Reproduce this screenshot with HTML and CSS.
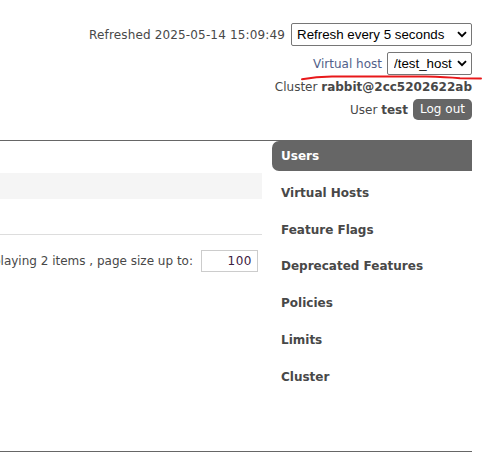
FILE: index.html
```html
<!DOCTYPE html>
<html>
<head>
<meta charset="utf-8">
<link rel="stylesheet" href="styles.css">
</head>
<body>
<div class="page">
  <div class="header">
    <div class="row">
      <span class="label refreshed">Refreshed 2025-05-14 15:09:49</span>
      <span class="sel-wrap sel-refresh">
        <select class="sel"><option>Refresh every 5 seconds</option></select>
        <svg class="chev" width="10" height="7" viewBox="0 0 10 7"><path d="M1 1.2 L5 5.2 L9 1.2" fill="none" stroke="#000" stroke-width="1.9"/></svg>
      </span>
    </div>
    <div class="row row-vhost">
      <span class="label vlabel">Virtual host</span>
      <span class="sel-wrap sel-vhost">
        <select class="sel"><option>/test_host</option></select>
        <svg class="chev" width="10" height="7" viewBox="0 0 10 7"><path d="M1 1.2 L5 5.2 L9 1.2" fill="none" stroke="#000" stroke-width="1.9"/></svg>
      </span>
    </div>
    <div class="row row-text">Cluster&nbsp;<b>rabbit@2cc5202622ab</b></div>
    <div class="row row-user">User&nbsp;<b>test</b><button class="logout">Log out</button></div>
    <svg class="scribble" width="484" height="12" viewBox="0 0 484 12"><path d="M302 5.2 Q316 2.6 332 2.4 L426 2.6 Q446 3.2 460 4.2 L481 4.6" fill="none" stroke="#e8181a" stroke-width="2" stroke-linecap="round"/></svg>
  </div>
  <div class="main">
    <div class="content">
      <div class="band"></div>
      <div class="rule"></div>
      <div class="pager">
        <span class="pager-text">Displaying 2 items , page size up to:</span>
        <input class="pagesize" type="text" value="100">
      </div>
    </div>
    <ul class="nav">
      <li class="nav-item active">Users</li>
      <li class="nav-item">Virtual Hosts</li>
      <li class="nav-item">Feature Flags</li>
      <li class="nav-item">Deprecated Features</li>
      <li class="nav-item">Policies</li>
      <li class="nav-item">Limits</li>
      <li class="nav-item">Cluster</li>
    </ul>
  </div>
</div>
</body>
</html>
```
FILE: styles.css
```css
html, body {
  margin: 0;
  padding: 0;
  background: #fff;
}
body {
  font-family: "DejaVu Sans", Verdana, sans-serif;
  font-size: 12px;
  color: #484848;
  width: 484px;
  height: 452px;
  overflow: hidden;
}
.page {
  width: 472px;
  padding-right: 12px;
}
.header {
  position: relative;
  padding-top: 23px;
  height: 117px;
  display: flex;
  flex-direction: column;
  align-items: flex-end;
}
.row {
  display: flex;
  align-items: center;
  justify-content: flex-end;
  white-space: nowrap;
}
.label {
  margin-right: 6px;
}
.refreshed {
  letter-spacing: 0.15px;
}
.vlabel {
  color: #52618a;
  margin-right: 5px;
}
.row-vhost {
  margin-top: 6px;
}
.row-text {
  margin-top: 5px;
  height: 14px;
  line-height: 14px;
}
.row-user {
  margin-top: 5px;
  height: 21px;
}
.row b {
  color: #484848;
}
.sel-wrap {
  position: relative;
  display: block;
  height: 23px;
}
.sel {
  appearance: none;
  -webkit-appearance: none;
  box-sizing: border-box;
  height: 23px;
  border: 1px solid #767676;
  border-radius: 2px;
  background: #fff;
  color: #000;
  font-family: "Liberation Sans", Arial, sans-serif;
  font-size: 13.33px;
  padding: 0 16px 0 5px;
  margin: 0;
  outline: none;
}
.sel-refresh .sel {
  width: 181px;
}
.sel-vhost .sel {
  width: 85px;
  padding-left: 6px;
  padding-right: 14px;
}
.chev {
  position: absolute;
  right: 5px;
  top: 8px;
  pointer-events: none;
}
.logout {
  margin-left: 5px;
  height: 21px;
  box-sizing: border-box;
  border: none;
  border-radius: 5px;
  background: #666;
  color: #fff;
  font-family: "DejaVu Sans", Verdana, sans-serif;
  font-size: 12px;
  padding: 0 6px;
  width: 59px;
  line-height: 21px;
}
.scribble {
  position: absolute;
  left: 0;
  top: 74px;
}
.main {
  display: flex;
  border-top: 1px solid #666;
  border-bottom: 1px solid #666;
  height: 310px;
}
.content {
  width: 262px;
  overflow: hidden;
  padding-top: 32px;
  flex: none;
}
.band {
  height: 26px;
  background: #f5f5f5;
}
.rule {
  margin-top: 35px;
  border-top: 1px solid #ddd;
}
.pager {
  margin-top: 15px;
  display: flex;
  justify-content: flex-end;
  align-items: center;
  white-space: nowrap;
  padding-right: 4px;
}
.pager-text {
  flex: none;
  margin-right: 8px;
}
.pagesize {
  flex: none;
  box-sizing: border-box;
  width: 57px;
  height: 22px;
  border: 1px solid #ccc;
  font-family: "DejaVu Sans", Verdana, sans-serif;
  font-size: 12px;
  color: #3a2040;
  text-align: right;
  padding: 0 5px;
  margin: 0;
  letter-spacing: 0.5px;
}
.nav {
  list-style: none;
  margin: 0 0 0 10px;
  padding: 0;
  width: 200px;
}
.nav-item {
  height: 30px;
  line-height: 30px;
  padding-left: 9px;
  margin-bottom: 6.8px;
  font-weight: bold;
  color: #484848;
}
.nav-item.active {
  background: #666;
  color: #fff;
  border-radius: 7px 0 0 7px;
}
```
